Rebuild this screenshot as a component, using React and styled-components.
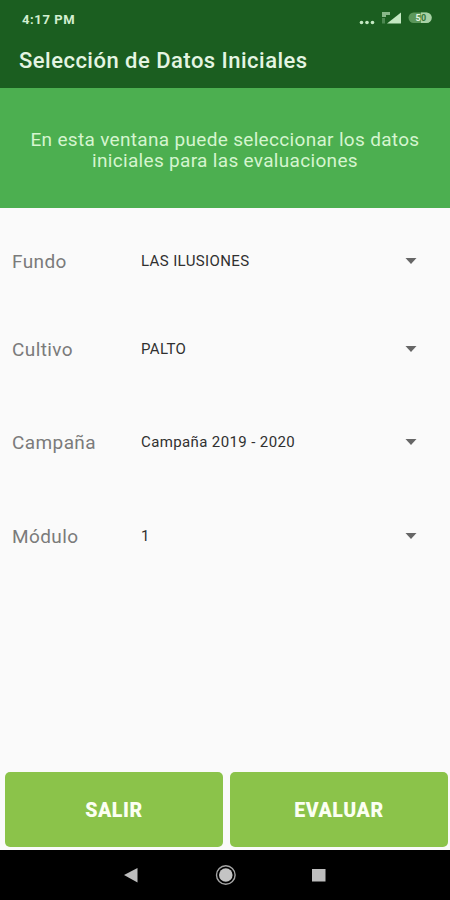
import React from 'react';
import styled, { createGlobalStyle } from 'styled-components';

const GlobalStyle = createGlobalStyle`
    * {
        box-sizing: border-box;
    }
    body {
        margin: 0;
        background: #fafafa;
        font-family: Roboto, 'Liberation Sans', sans-serif;
    }
`;

const Screen = styled.div`
    width: 450px;
    height: 900px;
    display: flex;
    flex-direction: column;
    overflow: hidden;
    background: #fafafa;
`;

const Header = styled.header`
    height: 88px;
    background: #1b5e20;
    color: #e4f5e2;
`;

const StatusBar = styled.div`
    height: 38px;
    padding: 0 18px 0 22px;
    display: flex;
    align-items: center;
    justify-content: space-between;
`;

const Clock = styled.span`
    font-size: 13px;
    font-weight: 700;
    letter-spacing: 0.6px;
    color: #d3efd0;
`;

const Title = styled.h1`
    margin: 0;
    padding: 1px 19px 0;
    font-size: 22px;
    font-weight: 500;
    line-height: 44px;
    letter-spacing: 0.48px;
    white-space: nowrap;
`;

const Banner = styled.p`
    height: 120px;
    margin: 0;
    padding-top: 3px;
    display: flex;
    align-items: center;
    justify-content: center;
    background: #4caf50;
    color: #d5f5cf;
    font-size: 19px;
    line-height: 21px;
    letter-spacing: 0.32px;
    text-align: center;
`;

const Form = styled.main`
    flex: 1;
    padding: 8px 0 0 12px;
`;

const Field = styled.div`
    height: ${props => props.$height}px;
    display: flex;
    align-items: flex-start;
    line-height: 90px;
`;

const Label = styled.label`
    width: 129px;
    padding-top: 1px;
    color: #7b7b7b;
    font-size: 19px;
    letter-spacing: 0.4px;
`;

const Value = styled.span`
    width: 264px;
    color: #303030;
    font-size: 15px;
    letter-spacing: 0.38px;
`;

const Arrow = styled.svg`
    width: 12px;
    height: 6px;
    margin-top: 42px;
`;

const Actions = styled.div`
    height: 78px;
    padding: 0 2px 3px 5px;
    display: flex;
    gap: 7px;
`;

const ActionButton = styled.button`
    flex: 1;
    padding: 1px 0 0;
    border: 0;
    border-radius: 5px;
    background: #8bc34a;
    color: #fbfff2;
    font-family: inherit;
    font-size: 19.5px;
    font-weight: 900;
    letter-spacing: 0.6px;
`;

const NavBar = styled.nav`
    height: 50px;
    background: #000;
`;

const fields = [
    { label: 'Fundo', value: 'LAS ILUSIONES', height: 88 },
    { label: 'Cultivo', value: 'PALTO', height: 93 },
    { label: 'Campaña', value: 'Campaña 2019 - 2020', height: 94 },
    { label: 'Módulo', value: '1', height: 90 },
];

const StatusIcons = () => (
    <svg width="74" height="18" viewBox="358 10 74 18">
        <g fill="#c4e8c2">
            <circle cx="361.5" cy="22.5" r="1.8" />
            <circle cx="367" cy="22.5" r="1.8" />
            <circle cx="372.5" cy="22.5" r="1.8" />
            <path d="M387 23.5 L401 12.5 V23.5 Z" />
            <path d="M382 12 H390 V15 H386 V17 H382 Z" opacity="0.65" />
            <path d="M382 18 H385 V23.5 H382 Z" opacity="0.3" />
        </g>
        <rect x="408.5" y="12.5" width="23" height="10.5" rx="5.2" fill="#5c985b" />
        <path d="M421 12.5 H426.5 A5.2 5.2 0 0 1 426.5 23 H421 Z" fill="#a8d1a5" />
        <text x="415.5" y="21" fontSize="9" fontWeight="700" fill="#e4f5e2">5</text>
        <text x="421" y="21" fontSize="9" fontWeight="700" fill="#347538">0</text>
    </svg>
);

const NavIcons = () => (
    <svg width="450" height="50" viewBox="0 850 450 50">
        <path d="M124 875 L137.5 868 V882.5 Z" fill="#bdbdbd" />
        <circle cx="225.8" cy="875" r="9.3" fill="none" stroke="#a5a5a5" strokeWidth="1.4" />
        <circle cx="225.8" cy="875" r="6.8" fill="#c4c4c4" />
        <rect x="312" y="869" width="13.5" height="12.5" fill="#bdbdbd" />
    </svg>
);

const App = () => {
    return (
        <>
            <GlobalStyle />
            <Screen>
                <Header>
                    <StatusBar>
                        <Clock>4:17 PM</Clock>
                        <StatusIcons />
                    </StatusBar>
                    <Title>Selección de Datos Iniciales</Title>
                </Header>
                <Banner>
                    En esta ventana puede seleccionar los datos
                    <br />
                    iniciales para las evaluaciones
                </Banner>
                <Form>
                    {fields.map(({ label, value, height }) => (
                        <Field key={label} $height={height}>
                            <Label>{label}</Label>
                            <Value>{value}</Value>
                            <Arrow viewBox="0 0 12 6">
                                <path d="M0.5 0 H11.5 L6 6 Z" fill="#666" />
                            </Arrow>
                        </Field>
                    ))}
                </Form>
                <Actions>
                    <ActionButton>SALIR</ActionButton>
                    <ActionButton>EVALUAR</ActionButton>
                </Actions>
                <NavBar>
                    <NavIcons />
                </NavBar>
            </Screen>
        </>
    );
};

export default App;
